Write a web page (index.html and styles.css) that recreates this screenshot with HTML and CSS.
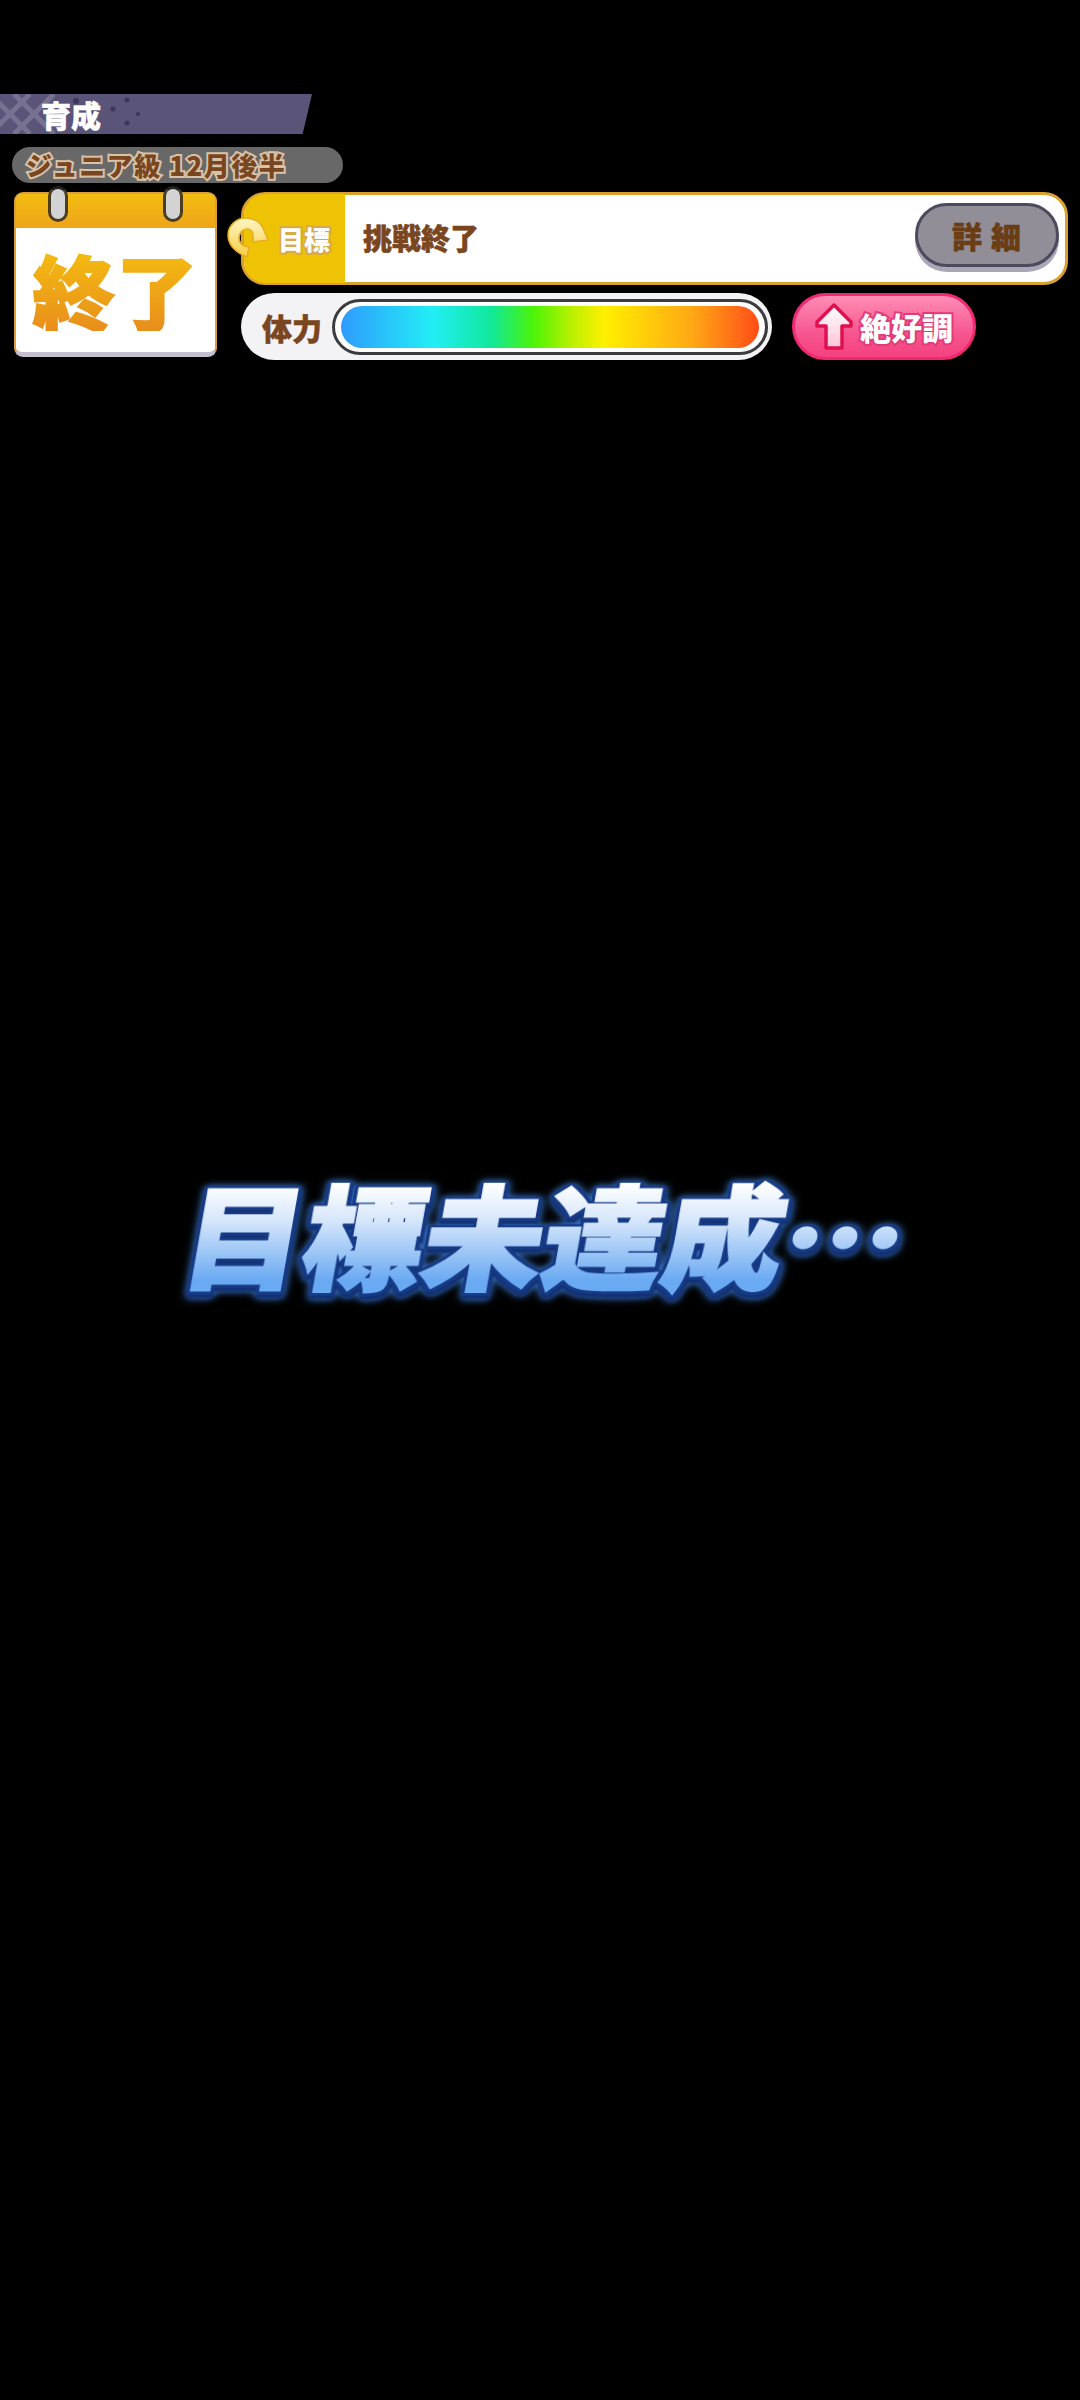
FILE: index.html
```html
<!DOCTYPE html>
<html lang="ja">
<head>
<meta charset="utf-8">
<title>育成</title>
<link rel="stylesheet" href="styles.css">
</head>
<body>
<header class="hud">
  <div class="title-bar">
    <svg class="title-pattern" width="150" height="40" viewBox="0 0 150 40">
      <g fill="none" stroke="#8f8ba8" stroke-width="5" opacity=".55">
        <path d="M-10 40L30 0M14 40L54 0M-10 0L30 40M14 0L54 40"/>
      </g>
      <g fill="#3c3757">
        <circle cx="76" cy="7" r="3"/><circle cx="92" cy="17" r="2.5"/><circle cx="113" cy="15" r="2.5"/><circle cx="127" cy="6" r="2.5"/><circle cx="127" cy="29" r="2.5"/><circle cx="138" cy="20" r="2"/>
      </g>
    </svg>
    <span class="title-text">育成</span>
  </div>
  <div class="date-pill"><span class="date-text">ジュニア級 12月後半</span></div>
  <div class="status">
    <div class="calendar">
      <span class="ring ring-left"></span>
      <span class="ring ring-right"></span>
      <div class="calendar-head"></div>
      <div class="calendar-body"><span class="calendar-text">終了</span></div>
    </div>
    <div class="panels">
      <div class="goal">
        <div class="goal-label"><span class="goal-label-text">目標</span></div>
        <svg class="goal-icon" width="42" height="44" viewBox="0 0 42 44">
          <defs><linearGradient id="swirl" x1="0" y1="0" x2="0" y2="1"><stop offset="0" stop-color="#fff6c4"/><stop offset="1" stop-color="#f6cd45"/></linearGradient></defs>
          <path d="M20 41L22 31C17 31 12 28 12 22C12 17 16 13 20 13C23 13 25 15 26 18L26 26L41 24L36 12C32 5 26 2 19 2C9 2 1 10 1 19C1 29 8 36 20 41Z" fill="url(#swirl)" stroke="#e8ad20" stroke-width="1.5" stroke-linejoin="round"/>
        </svg>
        <div class="goal-body">
          <span class="goal-text">挑戦終了</span>
          <div class="detail-button"><span class="detail-text">詳 細</span></div>
        </div>
      </div>
      <div class="vitals">
        <div class="stamina">
          <span class="stamina-label">体力</span>
          <div class="stamina-track"><div class="stamina-fill"></div></div>
        </div>
        <div class="mood">
          <svg class="mood-arrow" width="40" height="50" viewBox="0 0 40 50">
            <defs><linearGradient id="arrow" x1="0" y1="0" x2="0" y2="1"><stop offset="0" stop-color="#ffffff"/><stop offset="1" stop-color="#ffc4d8"/></linearGradient></defs>
            <path d="M20 3L37 20V24H28V46H12V24H3V20Z" fill="url(#arrow)" stroke="#e0104f" stroke-width="3.5" stroke-linejoin="round"/>
          </svg>
          <span class="mood-text">絶好調</span>
        </div>
      </div>
    </div>
  </div>
</header>
<main class="stage">
  <h1 class="headline">目標未達成…</h1>
</main>
</body>
</html>
```
FILE: styles.css
```css
* { box-sizing: border-box; }
html, body { margin: 0; padding: 0; }
body {
  width: 1080px;
  height: 2400px;
  overflow: hidden;
  background: #000;
  font-family: "Noto Sans CJK JP", "Noto Sans", sans-serif;
}
.hud { padding-top: 94px; }
.title-bar {
  position: relative;
  width: 312px;
  height: 40px;
  background: #5b5479;
  clip-path: polygon(0 0, 100% 0, 97% 100%, 0 100%);
  display: flex;
  align-items: center;
  padding-left: 41px;
}
.title-pattern { position: absolute; left: 0; top: 0; }
.title-text {
  position: relative;
  font-size: 30px;
  font-weight: 900;
  line-height: 1;
  color: #fff;
  -webkit-text-stroke: 0.5px #fff;
}
.date-pill {
  width: 331px;
  height: 36px;
  margin: 13px 0 9px 12px;
  padding-left: 14px;
  border-radius: 18px;
  background: #686868;
  display: flex;
  align-items: center;
}
.date-text {
  font-size: 26px;
  font-weight: 900;
  line-height: 1;
  letter-spacing: 1.5px;
  color: #7a4620;
  -webkit-text-stroke: 4px #d8c3a8;
  paint-order: stroke fill;
  white-space: pre;
}
.status { display: flex; padding-left: 14px; gap: 24px; }
.calendar {
  position: relative;
  width: 203px;
  height: 165px;
  border: 2px solid #d99f3a;
  border-bottom: 5px solid #c5bfd0;
  border-radius: 9px;
  background: #fff;
  display: flex;
  flex-direction: column;
}
.calendar-head {
  height: 34px;
  flex: none;
  border-radius: 6px 6px 0 0;
  background: linear-gradient(#f2bd10, #efa41a);
}
.calendar-body {
  flex: 1;
  display: flex;
  align-items: center;
  justify-content: center;
}
.calendar-text {
  font-size: 82px;
  font-weight: 900;
  line-height: 1;
  letter-spacing: 1px;
  background: linear-gradient(#f5bd10, #e88e1c);
  -webkit-background-clip: text;
  background-clip: text;
  color: transparent;
  -webkit-text-stroke: 2px transparent;
}
.ring {
  position: absolute;
  top: -8px;
  width: 20px;
  height: 36px;
  border-radius: 10px;
  border: 3px solid #4b3d22;
  border-top-color: #222;
  background: #d3d3d3;
}
.ring-left { left: 32px; }
.ring-right { left: 147px; }
.panels { width: 827px; display: flex; flex-direction: column; gap: 8px; }
.goal {
  position: relative;
  height: 93px;
  display: flex;
  border: 3px solid #dba12f;
  border-radius: 24px;
  background: #fff;
}
.goal-icon { position: absolute; left: -17px; top: 21px; }
.goal-label {
  width: 101px;
  flex: none;
  margin: -1px 0;
  padding-left: 34px;
  border-radius: 21px 0 0 21px;
  background: #efc305;
  display: flex;
  align-items: center;
}
.goal-label-text {
  font-size: 26px;
  font-weight: 900;
  line-height: 1;
  color: #fff;
  -webkit-text-stroke: 4px #d9a94a;
  paint-order: stroke fill;
}
.goal-body {
  flex: 1;
  display: flex;
  align-items: center;
  justify-content: space-between;
  padding: 0 6px 8px 18px;
}
.goal-text {
  font-size: 29px;
  font-weight: 900;
  line-height: 1;
  color: #7a4620;
  padding-top: 5px;
  -webkit-text-stroke: 0.5px #7a4620;
}
.detail-button {
  width: 144px;
  height: 64px;
  border-radius: 32px;
  border: 3px solid #4c4a5c;
  background: #918e98;
  box-shadow: 0 5px 0 #a9a7b6;
  display: flex;
  align-items: center;
  justify-content: center;
}
.detail-text {
  font-size: 30px;
  font-weight: 900;
  line-height: 1;
  letter-spacing: 1px;
  color: #6a3d15;
  white-space: pre;
  -webkit-text-stroke: 0.5px #6a3d15;
}
.vitals { display: flex; gap: 20px; }
.stamina {
  width: 531px;
  height: 67px;
  border-radius: 34px;
  background: #f3f3f6;
  display: flex;
  align-items: center;
  padding-left: 21px;
  gap: 10px;
}
.stamina-label {
  font-size: 30px;
  font-weight: 900;
  line-height: 1;
  color: #7a4620;
  -webkit-text-stroke: 0.5px #7a4620;
}
.stamina-track {
  width: 436px;
  height: 56px;
  border: 3px solid #3c3c3e;
  border-radius: 28px;
  background: #fff;
  padding: 4px 6px;
}
.stamina-fill {
  height: 100%;
  border-radius: 21px;
  background: linear-gradient(90deg, #2f9bff 0%, #22eef5 22%, #10e89a 36%, #4bf408 46%, #b8f000 55%, #fff000 63%, #ffa815 84%, #ff4d18 100%);
}
.mood {
  width: 184px;
  height: 67px;
  border-radius: 34px;
  border: 3px solid #f02a72;
  background: linear-gradient(#ff8db5, #f75690 60%, #f4417f);
  display: flex;
  align-items: center;
  gap: 6px;
  padding-left: 19px;
}
.mood-arrow { flex: none; }
.mood-text {
  font-size: 31px;
  font-weight: 900;
  line-height: 1;
  color: #fff;
  -webkit-text-stroke: 4px #e33a78;
  paint-order: stroke fill;
}
.stage { padding: 800px 0 0 186px; }
.headline {
  margin: 0;
  width: max-content;
  font-size: 120px;
  font-weight: 900;
  line-height: 1.2;
  transform: skewX(-10deg) scaleY(0.93);
  background: linear-gradient(#ffffff 14%, #d5e6fb 42%, #6aaaf2 86%);
  -webkit-background-clip: text;
  background-clip: text;
  color: transparent;
  -webkit-text-stroke: 3px transparent;
  filter:
    drop-shadow(3px 0 0 #163a86)
    drop-shadow(-3px 0 0 #163a86)
    drop-shadow(0 3px 0 #163a86)
    drop-shadow(0 -2px 0 #163a86)
    drop-shadow(1px 4px 1px #12306f)
    drop-shadow(0 0 4px #3f86e6);
}
```
